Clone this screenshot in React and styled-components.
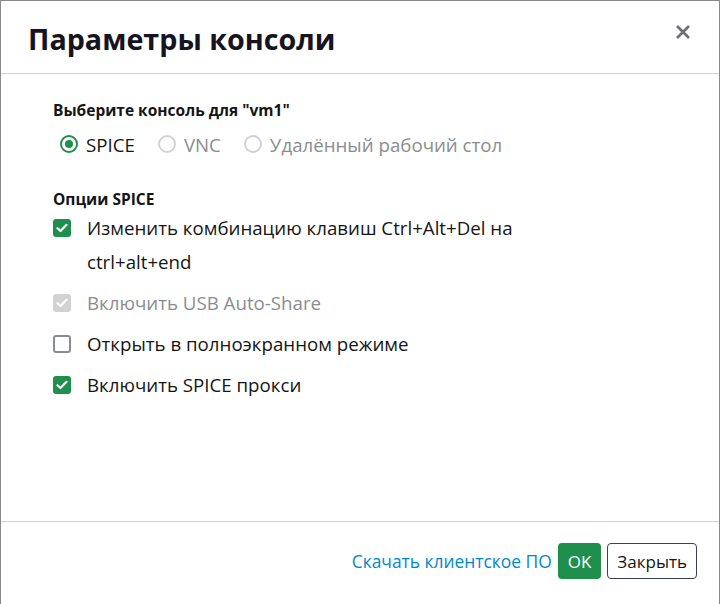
import React, { useState } from 'react';
import styled, { createGlobalStyle } from 'styled-components';

const GlobalStyle = createGlobalStyle`
  html, body {
    margin: 0;
    padding: 0;
    background: #fff;
    font-family: "Open Sans", "Noto Sans", sans-serif;
  }
`;

const Modal = styled.div`
  width: 720px;
  height: 620px;
  box-sizing: border-box;
  border: 1px solid #8a8a8a;
  background: #fff;
  display: flex;
  flex-direction: column;
`;

const Header = styled.header`
  height: 73px;
  flex: none;
  box-sizing: border-box;
  border-bottom: 1px solid #d2d2d2;
  display: flex;
  align-items: center;
  justify-content: space-between;
  padding: 3px 24px 0 27px;
`;

const Title = styled.h1`
  margin: 0;
  font-size: 28.7px;
  font-weight: 700;
  color: #151420;
`;

const CloseButton = styled.button`
  border: none;
  background: none;
  padding: 0;
  width: 24px;
  height: 24px;
  display: flex;
  align-items: center;
  justify-content: center;
  cursor: pointer;
  margin-top: -13px;
`;

const Body = styled.main`
  height: 447px;
  flex: none;
  box-sizing: border-box;
  padding: 25px 52px 0 52px;
`;

const SectionLabel = styled.div`
  font-size: 15.5px;
  font-weight: 700;
  color: #151515;
  margin-top: ${(p) => p.$top || 0}px;
`;

const RadioRow = styled.div`
  display: flex;
  gap: 23px;
  padding-left: 7px;
  margin-top: 7px;
  height: 32px;
  align-items: center;
`;

const RadioLabel = styled.label`
  display: flex;
  align-items: center;
  gap: 8px;
  font-size: 18.7px;
  color: ${(p) => (p.$disabled ? '#8a8d90' : '#151515')};
`;

const RadioCircle = styled.span`
  width: 18px;
  height: 18px;
  box-sizing: border-box;
  border-radius: 50%;
  border: 2px solid ${(p) => (p.$checked ? '#1e8f4c' : '#d2d2d2')};
  display: flex;
  align-items: center;
  justify-content: center;
  &::after {
    content: '';
    width: 8px;
    height: 8px;
    border-radius: 50%;
    background: ${(p) => (p.$checked ? '#1e8f4c' : 'transparent')};
  }
`;

const OptionList = styled.div`
  margin-top: 1px;
  display: flex;
  flex-direction: column;
  gap: 7px;
`;

const CheckRow = styled.label`
  display: flex;
  align-items: flex-start;
  gap: 16px;
  font-size: 18.7px;
  line-height: 34px;
  color: ${(p) => (p.$disabled ? '#8a8d90' : '#151515')};
  max-width: 480px;
`;

const Box = styled.span`
  flex: none;
  width: 18px;
  height: 18px;
  margin-top: 8px;
  box-sizing: border-box;
  border-radius: 3px;
  display: flex;
  align-items: center;
  justify-content: center;
  background: ${(p) => (p.$checked ? (p.$disabled ? '#d2d2d2' : '#1e8f4c') : '#fff')};
  border: ${(p) => (p.$checked ? 'none' : '2px solid #8a8d97')};
`;

const Footer = styled.footer`
  height: 82px;
  flex: none;
  border-top: 1px solid #d2d2d2;
  display: flex;
  align-items: flex-start;
  justify-content: flex-end;
  padding: 21px 22px 0 0;
  gap: 6px;
`;

const Link = styled.a`
  color: #0088ce;
  font-size: 17.4px;
  text-decoration: none;
  line-height: 36px;
`;

const Button = styled.button`
  height: 36px;
  box-sizing: border-box;
  border-radius: 4px;
  font-family: inherit;
  font-size: 17px;
  padding: 0 ${(p) => (p.$primary ? 10 : 9)}px;
  background: ${(p) => (p.$primary ? '#1e8f4c' : '#fff')};
  color: ${(p) => (p.$primary ? '#fff' : '#151515')};
  border: ${(p) => (p.$primary ? 'none' : '1px solid #3c3f55')};
  cursor: pointer;
`;

const Check = () => (
  <svg width="12" height="10" viewBox="0 0 12 10">
    <path d="M1.5 5.2 L4.5 8 L10.5 1.8" fill="none" stroke="#fff" strokeWidth="2.2" strokeLinecap="round" strokeLinejoin="round" />
  </svg>
);

const options = [
  { label: 'Изменить комбинацию клавиш Ctrl+Alt+Del на ctrl+alt+end', checked: true },
  { label: 'Включить USB Auto-Share', checked: true, disabled: true },
  { label: 'Открыть в полноэкранном режиме', checked: false },
  { label: 'Включить SPICE прокси', checked: true },
];

const radios = [
  { label: 'SPICE', checked: true },
  { label: 'VNC', disabled: true },
  { label: 'Удалённый рабочий стол', disabled: true },
];

export default function App() {
  const [opts] = useState(options);
  return (
    <>
      <GlobalStyle />
      <Modal>
        <Header>
          <Title>Параметры консоли</Title>
          <CloseButton aria-label="Закрыть">
            <svg width="16" height="16" viewBox="0 0 16 16">
              <path d="M2 2 L14 14 M14 2 L2 14" stroke="#6a6e73" strokeWidth="2.6" strokeLinecap="butt" />
            </svg>
          </CloseButton>
        </Header>
        <Body>
          <SectionLabel>Выберите консоль для "vm1"</SectionLabel>
          <RadioRow>
            {radios.map((r) => (
              <RadioLabel key={r.label} $disabled={r.disabled}>
                <RadioCircle $checked={r.checked} />
                {r.label}
              </RadioLabel>
            ))}
          </RadioRow>
          <SectionLabel $top={28}>Опции SPICE</SectionLabel>
          <OptionList>
            {opts.map((o) => (
              <CheckRow key={o.label} $disabled={o.disabled}>
                <Box $checked={o.checked} $disabled={o.disabled}>
                  {o.checked && <Check />}
                </Box>
                <span>{o.label}</span>
              </CheckRow>
            ))}
          </OptionList>
        </Body>
        <Footer>
          <Link href="#">Скачать клиентское ПО</Link>
          <Button $primary>OK</Button>
          <Button>Закрыть</Button>
        </Footer>
      </Modal>
    </>
  );
}
